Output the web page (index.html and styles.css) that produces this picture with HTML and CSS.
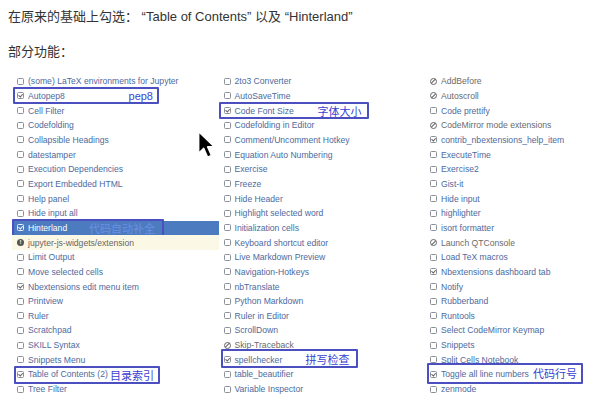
FILE: index.html
```html
<!DOCTYPE html>
<html>
<head>
<meta charset="utf-8">
<link rel="stylesheet" href="styles.css">
</head>
<body>
<p class="intro">在原来的基础上勾选： “Table of Contents” 以及 “Hinterland”</p>
<p class="intro intro-2">部分功能：</p>
<div class="lists">
  <ul class="col">
    <li><span class="box"></span>(some) LaTeX environments for Jupyter</li>
    <li><span class="box on"></span>Autopep8<span class="note note-pep8"><span class="note-text">pep8</span></span></li>
    <li><span class="box"></span>Cell Filter</li>
    <li><span class="box"></span>Codefolding</li>
    <li><span class="box"></span>Collapsible Headings</li>
    <li><span class="box"></span>datestamper</li>
    <li><span class="box"></span>Execution Dependencies</li>
    <li><span class="box"></span>Export Embedded HTML</li>
    <li><span class="box"></span>Help panel</li>
    <li><span class="box"></span>Hide input all</li>
    <li class="selected"><span class="box on"></span>Hinterland<span class="note note-hint"><span class="note-text note-faint">代码自动补全</span></span></li>
    <li class="warn"><span class="excl">!</span>jupyter-js-widgets/extension</li>
    <li><span class="box"></span>Limit Output</li>
    <li><span class="box"></span>Move selected cells</li>
    <li><span class="box on"></span>Nbextensions edit menu item</li>
    <li><span class="box"></span>Printview</li>
    <li><span class="box"></span>Ruler</li>
    <li><span class="box"></span>Scratchpad</li>
    <li><span class="box"></span>SKILL Syntax</li>
    <li><span class="box"></span>Snippets Menu</li>
    <li><span class="box on"></span>Table of Contents (2)<span class="note note-toc"><span class="note-text">目录索引</span></span></li>
    <li><span class="box"></span>Tree Filter</li>
  </ul>
  <ul class="col">
    <li><span class="box"></span>2to3 Converter</li>
    <li><span class="box"></span>AutoSaveTime</li>
    <li><span class="box on"></span>Code Font Size<span class="note note-font"><span class="note-text">字体大小</span></span></li>
    <li><span class="box"></span>Codefolding in Editor</li>
    <li><span class="box"></span>Comment/Uncomment Hotkey</li>
    <li><span class="box"></span>Equation Auto Numbering</li>
    <li><span class="box"></span>Exercise</li>
    <li><span class="box"></span>Freeze</li>
    <li><span class="box"></span>Hide Header</li>
    <li><span class="box"></span>Highlight selected word</li>
    <li><span class="box"></span>Initialization cells</li>
    <li><span class="box"></span>Keyboard shortcut editor</li>
    <li><span class="box"></span>Live Markdown Preview</li>
    <li><span class="box"></span>Navigation-Hotkeys</li>
    <li><span class="box"></span>nbTranslate</li>
    <li><span class="box"></span>Python Markdown</li>
    <li><span class="box"></span>Ruler in Editor</li>
    <li><span class="box"></span>ScrollDown</li>
    <li class="off"><span class="ban"></span>Skip-Traceback</li>
    <li><span class="box on"></span>spellchecker<span class="note note-spell"><span class="note-text">拼写检查</span></span></li>
    <li><span class="box"></span>table_beautifier</li>
    <li><span class="box"></span>Variable Inspector</li>
  </ul>
  <ul class="col">
    <li class="off"><span class="ban"></span>AddBefore</li>
    <li class="off"><span class="ban"></span>Autoscroll</li>
    <li><span class="box"></span>Code prettify</li>
    <li class="off"><span class="ban"></span>CodeMirror mode extensions</li>
    <li><span class="box on"></span>contrib_nbextensions_help_item</li>
    <li><span class="box"></span>ExecuteTime</li>
    <li><span class="box"></span>Exercise2</li>
    <li><span class="box"></span>Gist-it</li>
    <li><span class="box"></span>Hide input</li>
    <li><span class="box"></span>highlighter</li>
    <li><span class="box"></span>isort formatter</li>
    <li class="off"><span class="ban"></span>Launch QTConsole</li>
    <li><span class="box"></span>Load TeX macros</li>
    <li><span class="box on"></span>Nbextensions dashboard tab</li>
    <li><span class="box"></span>Notify</li>
    <li><span class="box"></span>Rubberband</li>
    <li><span class="box"></span>Runtools</li>
    <li><span class="box"></span>Select CodeMirror Keymap</li>
    <li><span class="box"></span>Snippets</li>
    <li><span class="box"></span>Split Cells Notebook</li>
    <li><span class="box on"></span>Toggle all line numbers<span class="note note-lines"><span class="note-text">代码行号</span></span></li>
    <li><span class="box"></span>zenmode</li>
  </ul>
</div>
<svg class="cursor" width="20" height="31" viewBox="0 0 18 28">
  <path d="M1.5 1.5 L1.5 21 L6 16.5 L9.5 24.5 L13 23 L9.5 15.2 L15.5 15.2 Z" fill="#000" stroke="#fff" stroke-width="1.3" stroke-linejoin="round"/>
</svg>
</body>
</html>
```
FILE: styles.css
```css
html, body {
  margin: 0;
  padding: 0;
  background: #fff;
}
body {
  position: relative;
  width: 594px;
  height: 404px;
  overflow: hidden;
  font-family: "Liberation Sans", "Noto Sans CJK SC", sans-serif;
}
.intro {
  margin: 7px 0 0 8px;
  height: 20px;
  line-height: 20px;
  font-size: 13px;
  color: #333;
}
.intro-2 {
  margin-top: 15px;
}
.lists {
  display: grid;
  grid-template-columns: 206.5px 206.5px 1fr;
  margin: 12px 0 0 12px;
}
.col {
  list-style: none;
  margin: 0;
  padding: 0;
  min-width: 0;
}
.col li {
  position: relative;
  display: flex;
  align-items: center;
  height: 14.67px;
  padding-left: 5px;
  font-size: 8.6px;
  color: #4d6a9e;
  white-space: nowrap;
}
.box {
  box-sizing: border-box;
  width: 7px;
  height: 7px;
  margin-right: 4px;
  border: 1px solid #8a8f98;
  border-radius: 1.5px;
  background: #fff;
  position: relative;
  flex: none;
}
.box.on::after {
  content: "";
  position: absolute;
  left: 1.3px;
  top: -0.2px;
  width: 1.8px;
  height: 3.4px;
  border: solid #555;
  border-width: 0 1.2px 1.2px 0;
  transform: rotate(40deg);
}
.ban {
  box-sizing: border-box;
  width: 7px;
  height: 7px;
  margin-right: 4px;
  border: 1px solid #666;
  border-radius: 50%;
  position: relative;
  flex: none;
}
.ban::after {
  content: "";
  position: absolute;
  left: 2px;
  top: -0.5px;
  width: 1px;
  height: 6px;
  background: #666;
  transform: rotate(45deg);
}
.off {
  color: #6b6b6b !important;
}
.excl {
  width: 7px;
  height: 7px;
  margin-right: 4px;
  border-radius: 50%;
  background: #555;
  color: #fbf7e4;
  font-size: 6px;
  font-weight: bold;
  line-height: 7px;
  text-align: center;
  flex: none;
}
.warn {
  background: #fcf8e6;
  color: #666 !important;
}
.selected {
  background: #4c7bbf;
  color: #fff !important;
}
.selected .box {
  border-color: #e8eef8;
  background: transparent;
}
.selected .box.on::after {
  border-color: #fff;
}
.note {
  position: absolute;
  box-sizing: border-box;
  border: 2px solid #4b4fc0;
  border-radius: 1px;
  display: flex;
  align-items: center;
  justify-content: flex-end;
  padding-right: 4px;
}
.note-text {
  font-size: 11px;
  color: #3a3fd0;
  font-family: "Liberation Sans", "Noto Sans CJK SC", sans-serif;
}
.note-faint {
  color: #6a8fe6;
}
.note-pep8 {
  left: 1px;
  top: -1.5px;
  width: 146px;
  height: 17px;
}
.note-hint {
  left: 0;
  top: -2px;
  width: 152px;
  height: 19px;
  padding-right: 7px;
}
.note-toc {
  left: 2px;
  top: -0.8px;
  width: 146px;
  height: 17.5px;
  padding-right: 4px;
}
.note-font {
  left: 0;
  top: -1px;
  width: 150px;
  height: 17px;
  padding-right: 5px;
}
.note-spell {
  left: 2px;
  top: -3px;
  width: 137px;
  height: 19px;
  padding-right: 6px;
}
.note-lines {
  left: 2px;
  top: -4.5px;
  width: 156px;
  height: 21px;
  padding-right: 4px;
}
.cursor {
  position: absolute;
  left: 197px;
  top: 130px;
}
```
